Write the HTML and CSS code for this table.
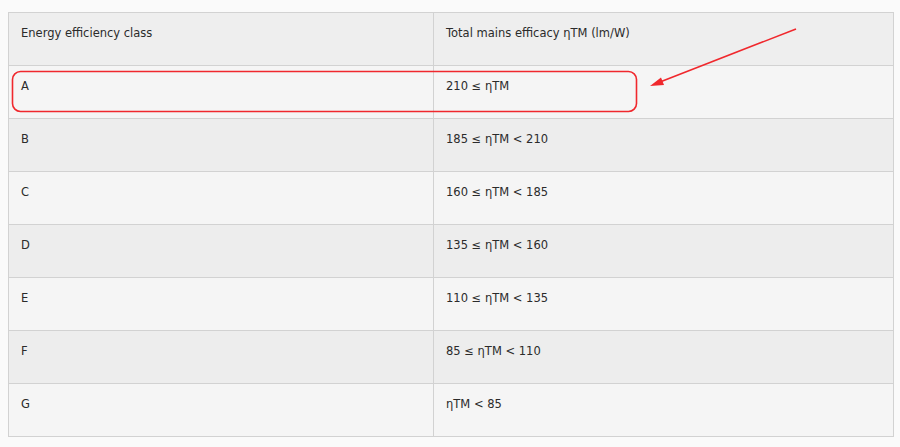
FILE: index.html
```html
<!DOCTYPE html>
<html>
<head>
<meta charset="utf-8">
<link rel="stylesheet" href="styles.css">
</head>
<body>
<div class="wrap">
  <table class="eff">
    <thead>
      <tr><th>Energy efficiency class</th><th>Total mains efficacy ηTM (lm/W)</th></tr>
    </thead>
    <tbody>
      <tr><td>A</td><td>210 ≤ ηTM</td></tr>
      <tr><td>B</td><td>185 ≤ ηTM &lt; 210</td></tr>
      <tr><td>C</td><td>160 ≤ ηTM &lt; 185</td></tr>
      <tr><td>D</td><td>135 ≤ ηTM &lt; 160</td></tr>
      <tr><td>E</td><td>110 ≤ ηTM &lt; 135</td></tr>
      <tr><td>F</td><td>85 ≤ ηTM &lt; 110</td></tr>
      <tr><td>G</td><td>ηTM &lt; 85</td></tr>
    </tbody>
  </table>
  <svg class="annot" width="900" height="447" viewBox="0 0 900 447">
    <rect x="12.5" y="71.5" width="624" height="40" rx="8" ry="8" fill="none" stroke="#f0282d" stroke-width="1.6"/>
    <line x1="796" y1="29" x2="660" y2="82" stroke="#f0282d" stroke-width="1.6"/>
    <polygon points="650,86 661,77.5 664,85" fill="#f0282d"/>
  </svg>
</div>
</body>
</html>
```

FILE: styles.css
```css
html, body {
  margin: 0;
  padding: 0;
  background: #fafafa;
}
.wrap {
  position: relative;
  width: 900px;
  height: 447px;
  padding: 12px 0 0 8px;
  box-sizing: border-box;
}
.eff {
  border-collapse: collapse;
  width: 886px;
  font-family: "DejaVu Sans", Verdana, sans-serif;
  font-size: 11.5px;
  color: #2b2b2b;
  border: 1px solid #d2d2d2;
}
.eff th, .eff td {
  text-align: left;
  font-weight: normal;
  vertical-align: top;
  height: 53px;
  box-sizing: border-box;
  padding: 13px 12px 0 12px;
  line-height: 15px;
  border-top: 1px solid #d2d2d2;
  border-left: 1px solid #d2d2d2;
}
.eff th:first-child, .eff td:first-child {
  width: 425px;
}
.eff thead tr { background: #eeeeee; }
.eff tbody tr:nth-child(odd) { background: #f5f5f5; }
.eff tbody tr:nth-child(even) { background: #ededed; }
.annot {
  position: absolute;
  left: 0;
  top: 0;
  pointer-events: none;
}
```
